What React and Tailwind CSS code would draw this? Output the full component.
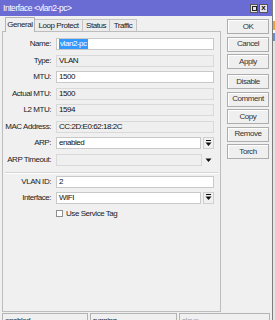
import React from "react";

const font = "font-['Liberation_Sans',Arial,sans-serif]";

function Label({ children }) {
  return (
    <div className="w-[48px] shrink-0 text-right text-[#222] whitespace-nowrap">{children}</div>
  );
}

function Box({ children, ro, selected, w = "w-[158px]" }) {
  return (
    <div
      className={
        "h-[12px] flex items-center pl-[2px] border overflow-hidden whitespace-nowrap text-[#111] " +
        w +
        (ro ? " bg-[#efefef] border-[#d9d9d9]" : " bg-white border-[#c9c9c9]")
      }
    >
      {selected ? <span className="bg-[#3399ff] text-white px-[1px] leading-[10px]">{children}</span> : children}
    </div>
  );
}

function ArrowBox() {
  return (
    <div className="w-[11px] h-[12px] ml-[2px] border border-[#cfcfcf] bg-[#f0f0f0] flex items-center justify-center">
      <svg width="7" height="7" viewBox="0 0 7 7">
        <rect x="1" y="0" width="5" height="1" fill="#111" />
        <path d="M0.5 2.5 L6.5 2.5 L3.5 6 Z" fill="#111" />
      </svg>
    </div>
  );
}

function Row({ label, children, className = "" }) {
  return (
    <div className={"flex items-center h-[12px] " + className}>
      <Label>{label}</Label>
      <div className="ml-[5px] flex items-center">{children}</div>
    </div>
  );
}

function Btn({ children, className = "" }) {
  return (
    <div
      className={
        "h-[15px] w-[42px] border border-[#adadad] bg-[#efefef] flex items-center justify-center text-[#333] shadow-[inset_1px_1px_0_#fff] " +
        className
      }
    >
      {children}
    </div>
  );
}

export default function App() {
  return (
    <div className={"w-[275px] h-[320px] flex overflow-hidden bg-[#e6e6e6] text-[8px] tracking-[-0.45px] leading-none " + font}>
      <div className="w-[273px] h-full flex flex-col bg-[#f0f0f0] border-r border-[#7d7d7d] shrink-0">
        {/* title bar */}
        <div className="h-[16px] bg-[#6b6bd4] flex items-center pl-[3px] pr-[4px] shrink-0">
          <span className="text-white text-[8.5px]">Interface &lt;vlan2-pc&gt;</span>
          <div className="ml-auto flex gap-[1px]">
            <div className="w-[8px] h-[9px] bg-[#e4e4e4] border border-[#555] flex items-center justify-center">
              <div className="w-[5px] h-[5px] border border-[#222]" />
            </div>
            <div className="w-[9px] h-[9px] bg-[#e4e4e4] border border-[#555] flex items-center justify-center text-[#111] text-[8px] font-bold tracking-normal">
              x
            </div>
          </div>
        </div>
        {/* body */}
        <div className="flex h-[296px] shrink-0">
          <div className="ml-[2px] w-[219px] flex flex-col">
            <div className="h-[15px] flex items-end pl-[3px]">
              <div className="relative z-10 w-[30px] h-[15px] -mb-[1px] border border-b-0 border-[#b4b4b4] bg-[#f0f0f0] flex items-center justify-center text-[#222]">
                General
              </div>
              <div className="w-[48px] h-[12px] border border-b-0 border-l-0 border-[#c4c4c4] bg-[#ececec] flex items-center justify-center text-[#222]">
                Loop Protect
              </div>
              <div className="w-[27px] h-[12px] border border-b-0 border-l-0 border-[#c4c4c4] bg-[#ececec] flex items-center justify-center text-[#222]">
                Status
              </div>
              <div className="w-[27px] h-[12px] border border-b-0 border-l-0 border-[#c4c4c4] bg-[#ececec] flex items-center justify-center text-[#222]">
                Traffic
              </div>
            </div>
            <div className="h-[281px] border border-[#bdbdbd] bg-[#f0f0f0] pt-[6px] flex flex-col">
              <Row label="Name:">
                <Box selected>vlan2-pc</Box>
              </Row>
              <Row label="Type:" className="mt-[4.5px]">
                <Box ro>VLAN</Box>
              </Row>
              <Row label="MTU:" className="mt-[4.5px]">
                <Box>1500</Box>
              </Row>
              <Row label="Actual MTU:" className="mt-[4.5px]">
                <Box ro>1500</Box>
              </Row>
              <Row label="L2 MTU:" className="mt-[4.5px]">
                <Box ro>1594</Box>
              </Row>
              <Row label="MAC Address:" className="mt-[4.5px]">
                <Box ro>CC:2D:E0:62:18:2C</Box>
              </Row>
              <Row label="ARP:" className="mt-[4.5px]">
                <Box w="w-[145px]">enabled</Box>
                <ArrowBox />
              </Row>
              <Row label="ARP Timeout:" className="mt-[4.5px]">
                <Box ro w="w-[146px]"></Box>
                <svg width="11" height="6" viewBox="0 0 11 6" className="ml-[1px]">
                  <path d="M2.5 1.5 L8.5 1.5 L5.5 5 Z" fill="#111" />
                </svg>
              </Row>
              <div className="mt-[6px] mx-[2px] h-[2px] border-t border-[#d4d4d4] border-b border-b-white" />
              <Row label="VLAN ID:" className="mt-[2px]">
                <Box>2</Box>
              </Row>
              <Row label="Interface:" className="mt-[4px]">
                <Box w="w-[145px]">WIFI</Box>
                <ArrowBox />
              </Row>
              <div className="mt-[6px] flex items-center pl-[53px]">
                <div className="w-[7px] h-[7px] border border-[#8e8e8e] bg-white" />
                <span className="ml-[3px] text-[#222]">Use Service Tag</span>
              </div>
            </div>
          </div>
          <div className="ml-[6px] w-[42px] pt-[3px] flex flex-col">
            <Btn>OK</Btn>
            <Btn className="mt-[2.5px]">Cancel</Btn>
            <Btn className="mt-[2.5px]">Apply</Btn>
            <Btn className="mt-[5px]">Disable</Btn>
            <Btn className="mt-[2.5px]">Comment</Btn>
            <Btn className="mt-[2.5px]">Copy</Btn>
            <Btn className="mt-[2.5px]">Remove</Btn>
            <Btn className="mt-[2.5px]">Torch</Btn>
          </div>
        </div>
        {/* status bar */}
        <div className="mt-[1px] flex gap-[2px] px-[2px] flex-1">
          <div className="w-[86px] border border-[#b4b4b4] border-b-0 pl-[2px] pt-[3px] text-[#222]">enabled</div>
          <div className="w-[87px] border border-[#b4b4b4] border-b-0 pl-[2px] pt-[3px] text-[#222]">running</div>
          <div className="w-[91px] border border-[#b4b4b4] border-b-0 pl-[2px] pt-[3px] text-[#a0a0a0]">slave</div>
        </div>
      </div>
      <div className="flex-1 flex flex-col bg-[#dedede]">
        <div className="h-[21px] bg-white" />
        <div className="h-[9px] bg-[#f0a040]" />
        <div className="h-[3px] bg-white" />
        <div className="h-[8px] bg-[#6a8fd0]" />
        <div className="flex-1 bg-[#e4e4e4]" />
      </div>
    </div>
  );
}
